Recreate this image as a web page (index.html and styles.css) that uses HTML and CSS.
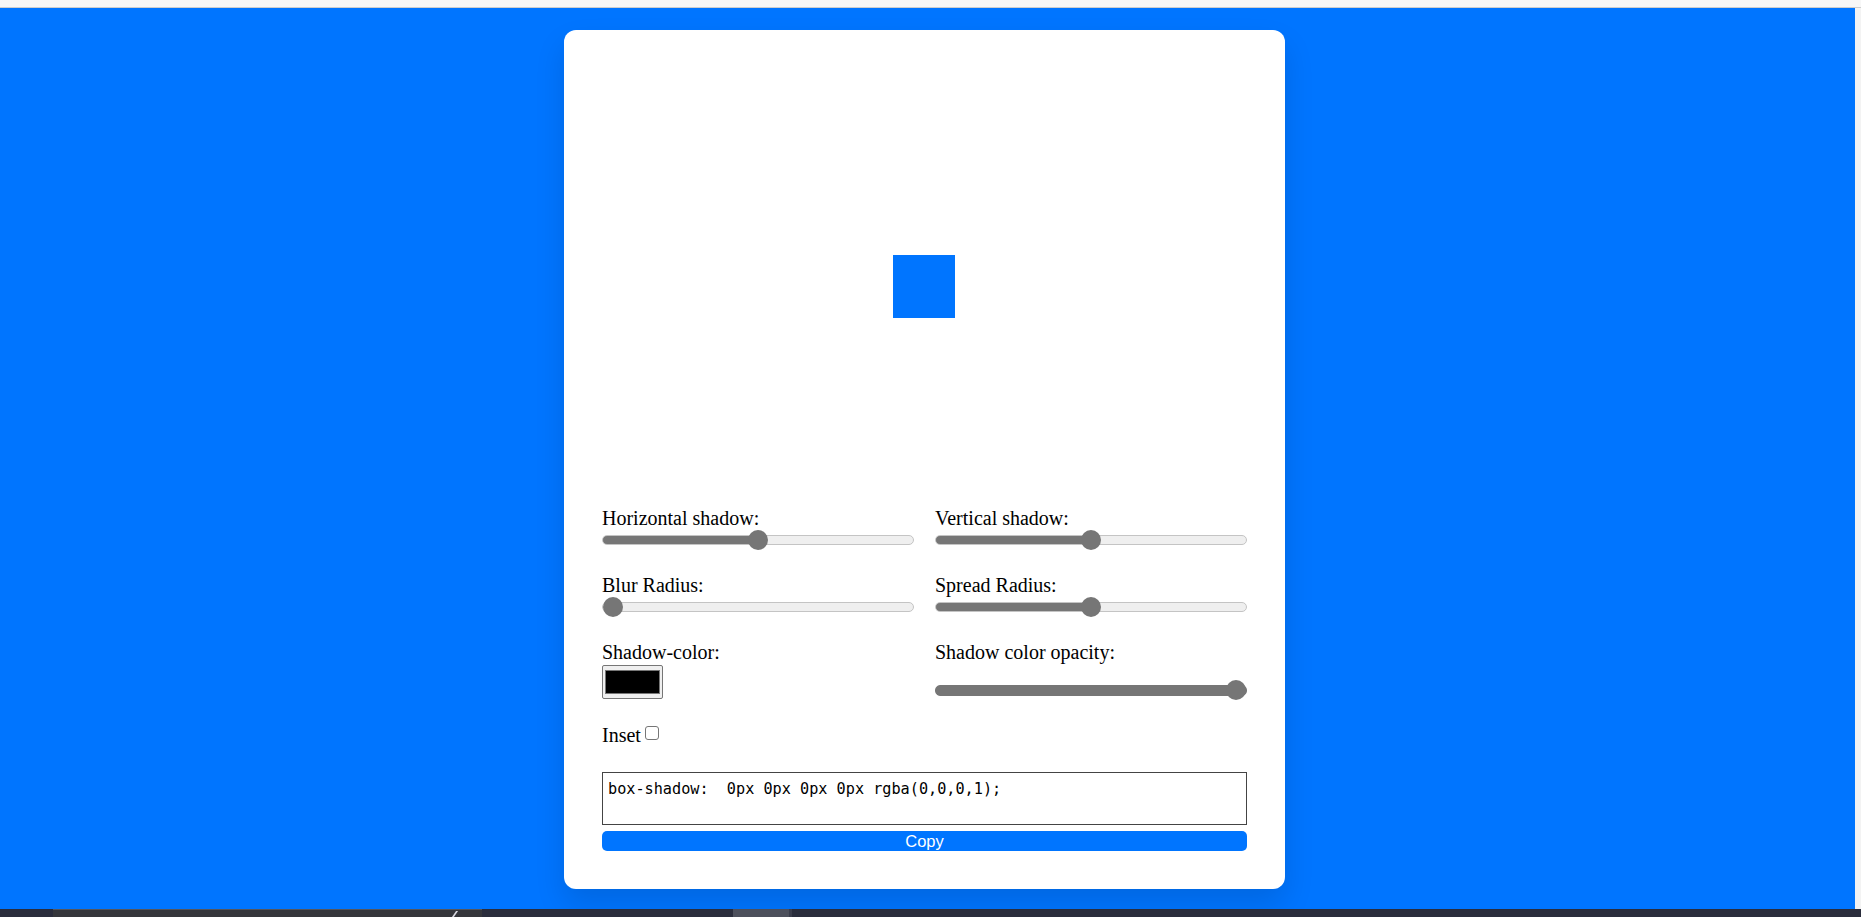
FILE: index.html
```html
<!DOCTYPE html>
<html lang="en">
<head>
<meta charset="utf-8">
<title>Box Shadow Generator</title>
<link rel="stylesheet" href="styles.css">
</head>
<body>
  <div class="chrome-top"></div>
  <div class="viewport">
    <main class="stage">
      <div class="card">
        <div class="preview">
          <div class="element"></div>
        </div>
        <div class="controls">
          <div class="field">
            <label class="label" for="h-shadow">Horizontal shadow:</label>
            <input class="range" id="h-shadow" type="range" min="-150" max="150" value="0" style="--fill:50%">
          </div>
          <div class="field">
            <label class="label" for="v-shadow">Vertical shadow:</label>
            <input class="range" id="v-shadow" type="range" min="-150" max="150" value="0" style="--fill:50%">
          </div>
          <div class="field">
            <label class="label" for="blur">Blur Radius:</label>
            <input class="range" id="blur" type="range" min="0" max="150" value="0" style="--fill:0%">
          </div>
          <div class="field">
            <label class="label" for="spread">Spread Radius:</label>
            <input class="range" id="spread" type="range" min="-150" max="150" value="0" style="--fill:50%">
          </div>
          <div class="field">
            <label class="label" for="color">Shadow-color:</label>
            <input class="color" id="color" type="color" value="#000000">
          </div>
          <div class="field">
            <label class="label" for="opacity">Shadow color opacity:</label>
            <input class="range range-opacity" id="opacity" type="range" min="0" max="1" step="0.1" value="1" style="--fill:100%">
          </div>
          <div class="inset-row">
            <label class="inset-label" for="inset">Inset</label><input class="check" id="inset" type="checkbox">
          </div>
        </div>
        <textarea class="code" rows="2" readonly>box-shadow:  0px 0px 0px 0px rgba(0,0,0,1);</textarea>
        <button class="copy" type="button">Copy</button>
      </div>
    </main>
    <div class="edge"></div>
  </div>
  <div class="taskbar">
    <div class="tb-gap"></div>
    <div class="tb-search"><span class="tb-mark"></span></div>
    <div class="tb-mid"></div>
    <div class="tb-app"></div>
    <div class="tb-sep"></div>
    <div class="tb-rest"></div>
  </div>
</body>
</html>
```

FILE: styles.css
```css
* {
  box-sizing: border-box;
}

html, body {
  margin: 0;
  padding: 0;
}

body {
  width: 1861px;
  height: 917px;
  overflow: hidden;
  display: flex;
  flex-direction: column;
  background: #f7f7f7;
  font-family: "Liberation Serif", "Times New Roman", serif;
  font-size: 20px;
  color: #000;
}

.chrome-top {
  height: 8px;
  flex: 0 0 8px;
  background: #f7f7f7;
  border-bottom: 1px solid #cdcdcd;
}

.viewport {
  flex: 0 0 901px;
  display: flex;
  overflow: hidden;
}

.stage {
  flex: 1;
  background: #0075ff;
  display: flex;
  justify-content: center;
  align-items: flex-start;
  padding: 22px 6px 0 0;
  overflow: hidden;
}

.edge {
  flex: 0 0 6px;
  background: #f3f3f3;
}

.card {
  width: 721px;
  flex: 0 0 721px;
  background: #fff;
  border-radius: 12px;
  padding: 38px 38px 38px 38px;
  box-shadow: 0 15px 30px rgba(0, 0, 0, 0.12);
}

.preview {
  height: 439px;
  display: flex;
  align-items: center;
  justify-content: center;
}

.element {
  width: 62px;
  height: 63px;
  background: #0075ff;
  margin-left: -1px;
  margin-top: -2px;
  box-shadow: 0px 0px 0px 0px rgba(0, 0, 0, 1);
}

.controls {
  display: grid;
  grid-template-columns: 1fr 1fr;
  column-gap: 21px;
  row-gap: 24px;
}

.field {
  display: flex;
  flex-direction: column;
  align-items: flex-start;
}

.label {
  display: block;
  height: 23px;
  line-height: 23px;
  white-space: nowrap;
}

.range {
  -webkit-appearance: none;
  appearance: none;
  display: block;
  width: 100%;
  height: 20px;
  margin: 0;
  padding: 0;
  background: transparent;
}

.range::-webkit-slider-runnable-track {
  height: 10px;
  border-radius: 5px;
  border: 1px solid #c4c4c4;
  background: linear-gradient(to right, #767676 0, #767676 var(--fill), #efefef var(--fill), #efefef 100%);
}

.range::-webkit-slider-thumb {
  -webkit-appearance: none;
  appearance: none;
  width: 20px;
  height: 20px;
  border-radius: 50%;
  background: #767676;
  border: none;
  margin-top: -6px;
}

.range-opacity {
  margin-top: 16px;
}

.range-opacity::-webkit-slider-runnable-track {
  height: 11px;
  border-color: #767676;
}

.range-opacity::-webkit-slider-thumb {
  margin-top: -5.5px;
}

.color {
  -webkit-appearance: none;
  appearance: none;
  width: 61px;
  height: 34px;
  margin: 1px 0 0 0;
  padding: 0;
  border: 1px solid #767676;
  border-radius: 2px;
  background: #efefef;
}

.color::-webkit-color-swatch-wrapper {
  padding: 4px 2px 4px 2px;
}

.color::-webkit-color-swatch {
  border: 1px solid #777;
  border-radius: 0;
}

.inset-row {
  grid-column: 1 / -1;
  height: 23px;
  line-height: 23px;
}

.check {
  -webkit-appearance: none;
  appearance: none;
  display: inline-block;
  width: 14px;
  height: 14px;
  margin: 0 0 2px 4px;
  border: 1px solid #767676;
  border-radius: 3px;
  background: #fff;
  vertical-align: baseline;
}

.code {
  display: block;
  width: 100%;
  height: 53px;
  margin: 25px 0 0 0;
  padding: 7px 5px 5px 5px;
  border: 1px solid #444;
  border-radius: 0;
  resize: none;
  overflow: hidden;
  font-family: "DejaVu Sans Mono", "Liberation Mono", monospace;
  font-size: 15.2px;
  line-height: 18px;
  color: #000;
  background: #fff;
}

.copy {
  display: block;
  width: 100%;
  height: 20px;
  margin: 6px 0 0 0;
  padding: 0;
  border: none;
  border-radius: 5px;
  background: #0075ff;
  color: #fff;
  font-family: "Liberation Sans", Arial, sans-serif;
  font-size: 16.5px;
  line-height: 20px;
  text-align: center;
}

.taskbar {
  flex: 0 0 8px;
  display: flex;
  background: #2a2d3c;
}

.tb-gap {
  flex: 0 0 53px;
}

.tb-search {
  flex: 0 0 429px;
  background: #35363b;
  border-top: 1px solid #55565c;
  position: relative;
}

.tb-mark {
  position: absolute;
  left: 401px;
  top: 1px;
  width: 2px;
  height: 6px;
  background: #d8d8e0;
  transform: skewX(-35deg);
}

.tb-mid {
  flex: 0 0 251px;
}

.tb-app {
  flex: 0 0 56px;
  background: #4d505c;
}

.tb-sep {
  flex: 0 0 3px;
  background: #3a3d4b;
}

.tb-rest {
  flex: 1;
}
```
